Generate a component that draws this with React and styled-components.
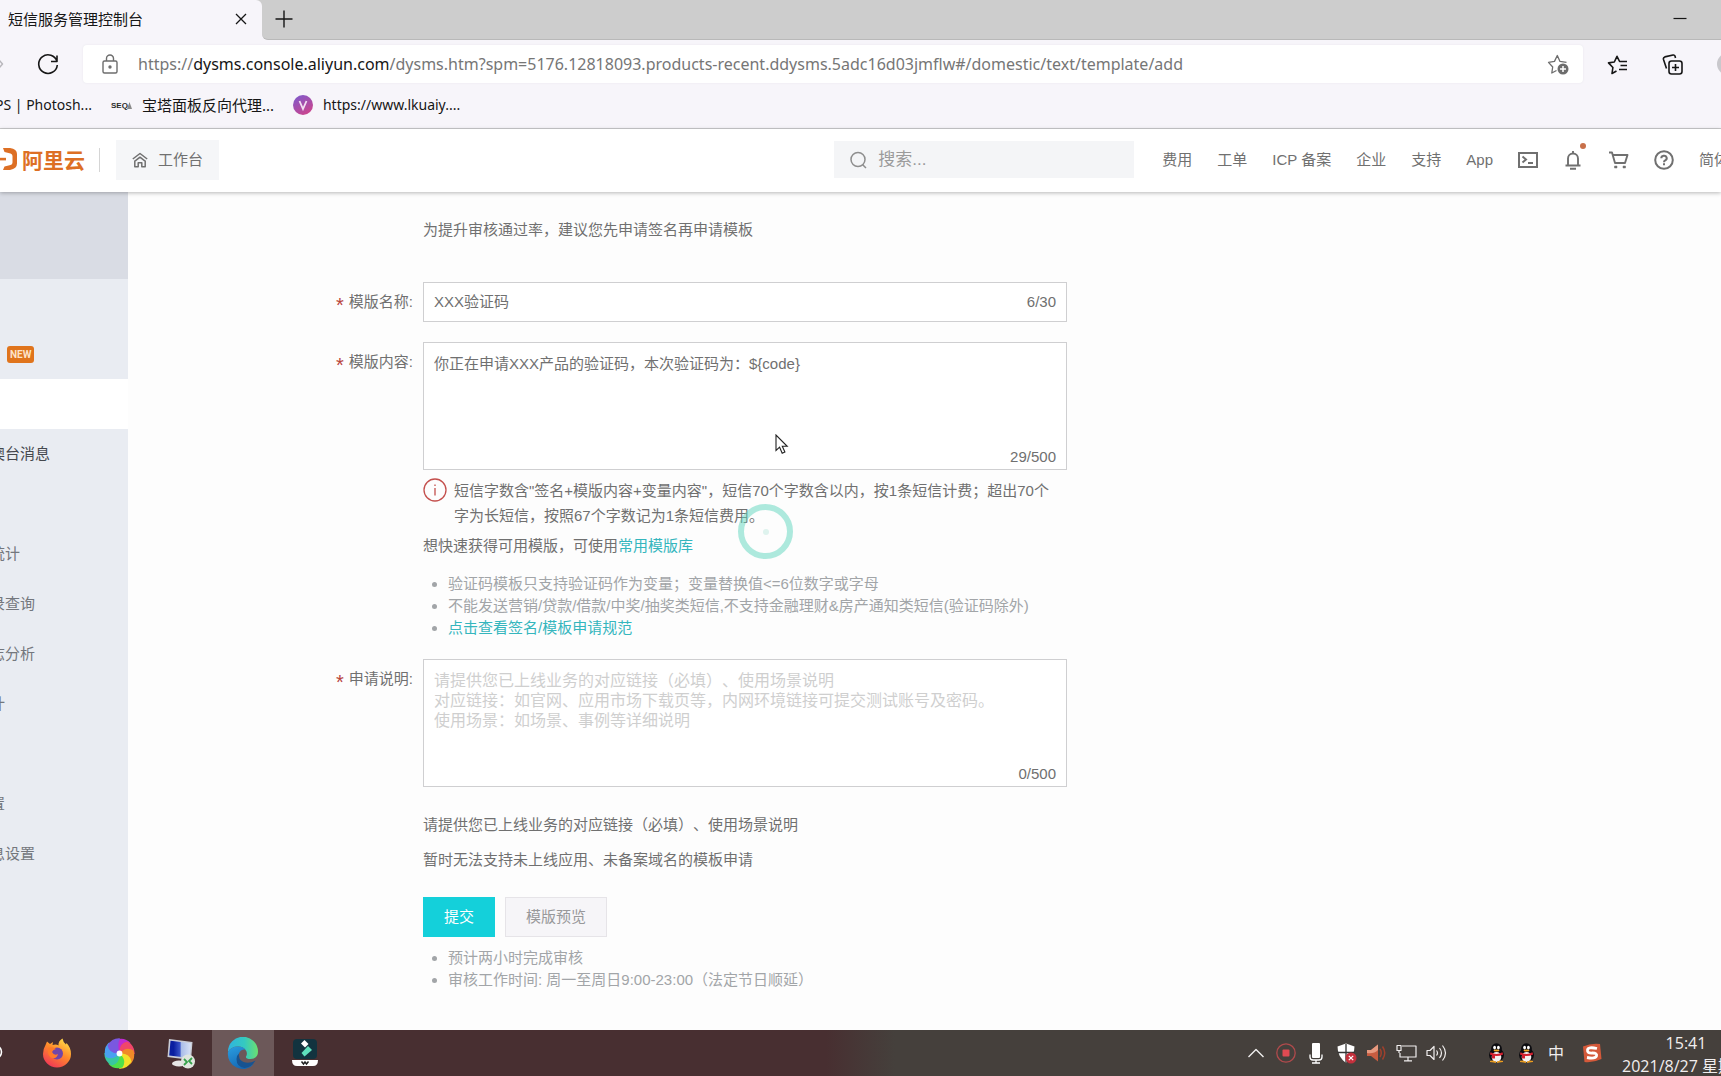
import React from "react";
import styled, { createGlobalStyle } from "styled-components";

const CJK = `"Noto Sans CJK SC", sans-serif`;

const Global = createGlobalStyle`
  * { box-sizing: border-box; }
  html, body { margin: 0; padding: 0; }
  body {
    overflow: hidden;
    background: #fdfdfd;
    color: #707070;
    font: 15px/20px "Liberation Sans", ${CJK};
    text-spacing-trim: space-all;
  }
  button, input, textarea { font: inherit; color: inherit; }
  button { padding: 0; border: 0; background: none; }
  a { text-decoration: none; color: inherit; }
  svg { display: block; flex: none; }
`;

const Page = styled.div`
  position: relative;
  display: flex;
  flex-direction: column;
  min-height: 100vh;
  overflow: hidden;
`;

/* ---------- browser chrome ---------- */

const Browser = styled.div`
  background: #f7f5fa;
  border-bottom: 1px solid #cbcbcd;
  color: #161616;
  font-family: "Noto Sans", ${CJK};
`;

const TabStrip = styled.div`
  display: flex;
  height: 40px;
  background: #cdcdcd;
`;

const TabWell = styled.div`
  display: flex;
  flex: 1;
  align-items: center;
  justify-content: space-between;
  padding: 0 34px 2px 12px;
  background: #cdcdcd;
  border-bottom: 1px solid #b9b9b9;
  border-bottom-left-radius: 6px;
`;

const TabBack = styled.div`
  display: flex;
  flex: 1;
  background: #f7f5fa;
`;

const Tab = styled.div`
  display: flex;
  align-items: center;
  justify-content: space-between;
  width: 262px;
  padding: 0 14px 2px 8px;
  background: #f7f5fa;
  border-top-right-radius: 6px;
`;

const IconButton = styled.button`
  display: flex;
  align-items: center;
  justify-content: center;
`;

const Toolbar = styled.div`
  display: flex;
  align-items: center;
  height: 48px;
`;

const Forward = styled.div`
  width: 37px;
`;

const Address = styled.div`
  display: flex;
  flex: 1;
  align-items: center;
  height: 38px;
  margin-left: 24px;
  padding: 0 14px 0 18px;
  background: #fff;
  border-radius: 4px;
  box-shadow: 0 0 2px #e6e4ea;
`;

const Url = styled.div`
  flex: 1;
  margin-left: 19px;
  color: #767676;
  font-size: 16px;
  line-height: 24px;
  white-space: nowrap;
`;

const Host = styled.span`
  color: #161616;
`;

const ToolIcons = styled.div`
  display: flex;
  align-items: center;
  gap: 34px;
  margin: 0 -18px 0 24px;
`;

const Avatar = styled.div`
  width: 22px;
  height: 22px;
  border-radius: 50%;
  background: #c9c8cc;
`;

const Bookmarks = styled.nav`
  display: flex;
  align-items: center;
  height: 40px;
  margin-left: -5px;
  padding-bottom: 6px;
  gap: 19px;
`;

const Bookmark = styled.a`
  display: flex;
  align-items: center;
  gap: 10px;
  font-size: ${(p) => (p.$latin ? 14 : 15)}px;
  white-space: nowrap;
`;

/* ---------- console header ---------- */

const Header = styled.header`
  position: relative;
  display: flex;
  align-items: center;
  height: 63px;
  padding-bottom: 2px;
  background: #fff;
  box-shadow: 0 1px 4px rgba(0, 0, 0, 0.28);
`;

const Brand = styled.a`
  display: flex;
  align-items: center;
  gap: 4px;
  padding: 0 14px 2px 0;
  color: #dd6f24;
  font: 700 21px/24px ${CJK};
`;

const Workbench = styled.button`
  display: flex;
  align-items: center;
  gap: 10px;
  height: 40px;
  margin-left: 16px;
  padding: 0 16px;
  background: #f5f6f8;
`;

const Rule = styled.div`
  width: 1px;
  height: 24px;
  background: #d5d5d5;
`;

const Search = styled.label`
  display: flex;
  align-items: center;
  gap: 11px;
  width: 300px;
  height: 37px;
  margin-left: auto;
  padding: 0 16px;
  background: #f4f5f7;
`;

const SearchInput = styled.input`
  flex: 1;
  min-width: 0;
  padding: 0;
  border: 0;
  outline: 0;
  background: none;
  font-size: 17px;
  &::placeholder { color: #9b9b9b; opacity: 1; }
`;

const TopNav = styled.nav`
  display: flex;
  align-items: center;
  gap: 25px;
  margin: 0 -8px 0 28px;
  white-space: nowrap;
`;

const BellWrap = styled.button`
  position: relative;
  display: flex;
`;

const Dot = styled.span`
  position: absolute;
  top: -7px;
  right: -3px;
  width: 6px;
  height: 6px;
  border-radius: 50%;
  background: #c8704a;
`;

/* ---------- body ---------- */

const Body = styled.div`
  display: flex;
  flex: 1;
`;

const Side = styled.nav`
  width: 128px;
  background: #e9ecf2;
`;

const SideTop = styled.div`
  height: 87px;
  background: #d9dce4;
`;

const SideItem = styled.a`
  display: flex;
  align-items: center;
  height: 50px;
  background: ${(p) => (p.$active ? "#fff" : "transparent")};
  color: ${(p) => (p.$strong ? "#45484e" : "#74777d")};
`;

const SideText = styled.span`
  display: flex;
  justify-content: flex-end;
  width: ${(p) => p.$end}px;
  overflow: hidden;
  white-space: nowrap;
`;

const NewTag = styled.span`
  margin-left: 7px;
  padding: 0 3px;
  border-radius: 3px;
  background: #e0741c;
  color: #fde3c8;
  font: 700 10px/17px "Roboto", sans-serif;
`;

const Form = styled.form`
  display: grid;
  flex: 1;
  grid-template-columns: 285px minmax(0, 644px);
  column-gap: 10px;
  row-gap: 20px;
  align-content: start;
  padding-top: 28px;
`;

const Lead = styled.p`
  grid-column: 2;
  margin: 0 0 22px;
`;

const Label = styled.label`
  display: flex;
  align-items: center;
  justify-content: flex-end;
  gap: 5px;
  height: 40px;
`;

const Star = styled.span`
  padding-top: 6px;
  color: #b8433c;
  font-size: 20px;
`;

const Field = styled.div`
  display: flex;
  height: 40px;
  padding: 0 10px;
  align-items: center;
  background: #fff;
  border: 1px solid #cfcfd1;
`;

const AreaField = styled.div`
  height: 128px;
  padding: 11px 10px 0;
  background: #fff;
  border: 1px solid #cfcfd1;
`;

const TextInput = styled.input`
  flex: 1;
  min-width: 0;
  padding: 0;
  border: 0;
  outline: 0;
  background: none;
`;

const TextArea = styled.textarea`
  display: block;
  width: 100%;
  height: 92px;
  padding: 0;
  border: 0;
  outline: 0;
  resize: none;
  overflow: hidden;
  background: none;
  line-height: 20px;
  &::placeholder { color: #cfcfcf; opacity: 1; font-size: 16px; }
`;

const Count = styled.div`
  text-align: right;
  line-height: 22px;
`;

const Notice = styled.div`
  display: flex;
  gap: 7px;
  margin-top: 8px;
  line-height: 25px;
`;

const Quick = styled.p`
  margin: 6px 0 15px;
  line-height: 24px;
`;

const Link = styled.a`
  color: #35b6bd;
`;

const List = styled.ul`
  margin: 0;
  padding-left: 25px;
  color: #a2a5a8;
  line-height: 22px;
`;

const After = styled.div`
  grid-column: 2;
  display: flex;
  flex-direction: column;
  gap: 15px;
  padding-top: 8px;
`;

const Para = styled.p`
  margin: 0;
`;

const Actions = styled.div`
  display: flex;
  gap: 10px;
  grid-column: 2;
  margin-top: 7px;
`;

const Action = styled.button`
  height: 40px;
  padding: 0 20px;
  border: 1px solid ${(p) => (p.$primary ? "#14d0da" : "#e6e4e8")};
  background: ${(p) => (p.$primary ? "#14d0da" : "#f6f5f8")};
  color: ${(p) => (p.$primary ? "#fff" : "#98989a")};
`;

const Foot = styled.div`
  grid-column: 2;
  margin-top: -10px;
`;

/* ---------- taskbar ---------- */

const Taskbar = styled.footer`
  display: flex;
  align-items: center;
  height: 46px;
  background: linear-gradient(90deg, #482f31 48%, #45403c 52%);
  color: #f1eeee;
  font: 16px/20px "Open Sans", ${CJK};
`;

const Task = styled.button`
  display: flex;
  align-items: center;
  justify-content: center;
  width: 62px;
  height: 46px;
  background: ${(p) => (p.$active ? "#6c5859" : "transparent")};
  &:first-child { margin-left: -36px; }
`;

const Tray = styled.div`
  display: flex;
  align-items: center;
  margin-left: auto;
  margin-right: -49px;
`;

const TrayItem = styled.div`
  display: flex;
  align-items: center;
  justify-content: center;
  width: 30px;
`;

const ImeGroup = styled.div`
  display: flex;
  align-items: center;
  margin: 0 11px 0 30px;
`;

const Clock = styled.div`
  width: 168px;
  padding-top: 4px;
  text-align: center;
  line-height: 23px;
  white-space: nowrap;
`;

/* ---------- pointer overlays ---------- */

const Ring = styled.div`
  position: absolute;
  left: 738px;
  top: 504px;
  display: flex;
  align-items: center;
  justify-content: center;
  width: 55px;
  height: 55px;
  border: 6px solid rgba(94, 214, 190, 0.5);
  border-radius: 50%;
  pointer-events: none;
  &::after {
    content: "";
    width: 6px;
    height: 6px;
    border-radius: 50%;
    background: #dff3ee;
  }
`;

const Pointer = styled.svg`
  position: absolute;
  left: 775px;
  top: 434px;
  pointer-events: none;
`;

/* ---------- drawings ---------- */

const Line = ({ w = 20, h = 20, box = "0 0 20 20", sw = 1.4, c = "currentColor", children }) => (
  <svg width={w} height={h} viewBox={box} fill="none" stroke={c} strokeWidth={sw} strokeLinejoin="round">
    {children}
  </svg>
);

const Penguin = () => (
  <svg width="17" height="20" viewBox="0 0 17 20">
    <ellipse cx="8.5" cy="12" rx="7.5" ry="7" fill="#0c0c10" />
    <ellipse cx="8.5" cy="6" rx="5.4" ry="5.8" fill="#0c0c10" />
    <ellipse cx="8.5" cy="14" rx="4.8" ry="5" fill="#f4f2f2" />
    <ellipse cx="6.6" cy="4.6" rx="1.4" ry="1.9" fill="#fff" />
    <ellipse cx="10.4" cy="4.6" rx="1.4" ry="1.9" fill="#fff" />
    <ellipse cx="8.5" cy="7.6" rx="3" ry="1" fill="#f0a020" />
    <path d="M2.5 9.2q6 3.4 12 0l.6 2.4q-6.300 3-13.200 0z" fill="#d3202f" />
    <path d="M4 11.500h3v4H4z" fill="#d3202f" />
    <path d="M2 18.500q3-1.500 6 .8zM15 18.500q-3-1.500-6 .8z" fill="#f0a020" stroke="#f0a020" />
  </svg>
);

const Pinwheel = () => {
  const colors = ["#c02bd0", "#f0466a", "#f08a28", "#f4e02a", "#4fe04a", "#39c7a0", "#4aa0f0", "#7a58e0"];
  return (
    <svg width="31" height="31" viewBox="-16 -16 32 32">
      {colors.map((c, i) => (
        <path key={c} d="M0 0Q-8 -7 -3 -14.500Q6 -17 11.500 -10.500Q5 -9 0 0z" fill={c} transform={`rotate(${i * 45})`} />
      ))}
      <circle r="3" fill="#fff" />
    </svg>
  );
};

const side = [
  { text: "澳台消息", end: 50, strong: true },
  { text: "", end: 0 },
  { text: "统计", end: 20 },
  { text: "录查询", end: 35 },
  { text: "志分析", end: 35 },
  { text: "计", end: 5 },
  { text: "", end: 0 },
  { text: "置", end: 5 },
  { text: "息设置", end: 35 },
];

const Required = ({ id, children }) => (
  <Label htmlFor={id}>
    <Star>*</Star>
    <span>{children}:</span>
  </Label>
);

function BrowserChrome() {
  return (
    <Browser>
      <TabStrip>
        <Tab>
          <span>短信服务管理控制台</span>
          <IconButton aria-label="关闭标签页">
            <Line w={14} h={14} box="0 0 14 14" sw={1.3}><path d="M2 2l10 10M12 2L2 12" /></Line>
          </IconButton>
        </Tab>
        <TabBack>
          <TabWell>
            <IconButton aria-label="新建标签页">
              <Line w={20} h={20} sw={1.4}><path d="M10 1.500v17M1.500 10h17" /></Line>
            </IconButton>
            <IconButton aria-label="最小化">
              <Line w={14} h={8} box="0 0 14 8" sw={1.2}><path d="M.5 3.500h13" /></Line>
            </IconButton>
          </TabWell>
        </TabBack>
      </TabStrip>
      <Toolbar>
        <Forward>
          <Line w={4} h={10} box="0 0 4 10" c="#b9b7bc" sw={1.5}><path d="M-1 1l3.500 4L-1 9" /></Line>
        </Forward>
        <IconButton aria-label="刷新">
          <Line w={22} h={22} box="0 0 22 22" sw={1.6}>
            <path d="M20 8.600A9.300 9.300 0 1 0 20.300 12M20 2.500v6h-6" />
          </Line>
        </IconButton>
        <Address>
          <Line w={18} h={22} box="0 0 18 22" c="#6d6d6d" sw={1.4}>
            <rect x="2" y="8" width="14" height="12" rx="1.500" />
            <path d="M5.500 8V5.500a3.500 3.500 0 0 1 7 0V8" />
            <circle cx="9" cy="14" r="1" fill="#6d6d6d" />
          </Line>
          <Url role="textbox" aria-label="地址栏">
            https://<Host>dysms.console.aliyun.com</Host>
            /dysms.htm?spm=5176.12818093.products-recent.ddysms.5adc16d03jmflw#/domestic/text/template/add
          </Url>
          <IconButton aria-label="添加收藏">
            <Line w={22} h={22} box="0 0 22 22" c="#6d6d6d" sw={1.300}>
              <path d="M9.500 17.500L4.800 20l.9-6L1.500 9.400l6-1L10.300 2.500l2.700 5.900 6.500.9" />
              <circle cx="16" cy="16" r="5.500" fill="#6d6d6d" stroke="none" />
              <path d="M16 13v6M13 16h6" stroke="#fff" strokeWidth="1.500" />
            </Line>
          </IconButton>
        </Address>
        <ToolIcons>
          <IconButton aria-label="收藏夹">
            <Line w={21} h={21} box="0 0 21 21" sw={1.600}>
              <path d="M9.500 17L5 19.500l.9-6L1.500 8.900l5.800-.9L10 2.300 12.600 7.500H20M13.500 11.500H20M12 15.500h8" />
            </Line>
          </IconButton>
          <IconButton aria-label="集锦">
            <Line w={21} h={21} box="0 0 21 21" sw={1.600}>
              <rect x="7" y="7" width="13" height="13" rx="2.500" />
              <path d="M13.500 10v7M10 13.500h7M4.500 14.500L1.500 5.500q-.5-2 1.300-2.600L11 1q1.500-.3 2 1l.5 2" />
            </Line>
          </IconButton>
          <Avatar />
        </ToolIcons>
      </Toolbar>
      <Bookmarks>
        <Bookmark href="#ps" $latin>PS | Photosh...</Bookmark>
        <Bookmark href="#bt">
          <svg width="21" height="14" viewBox="0 0 21 14">
            <text x="0" y="10" fontSize="8" fontWeight="700" fontFamily="Liberation Sans, sans-serif" fill="#2a2a2a">SEQ</text>
            <path d="M16 11l2.500-7L21 11z" fill="#8a8a8a" />
          </svg>
          宝塔面板反向代理...
        </Bookmark>
        <Bookmark href="#lk" $latin>
          <svg width="20" height="20" viewBox="0 0 20 20">
            <defs>
              <linearGradient id="vg" x1="0" y1="0" x2="0.600" y2="1">
                <stop offset="0" stopColor="#7a5bd0" />
                <stop offset="1" stopColor="#c9458f" />
              </linearGradient>
            </defs>
            <circle cx="10" cy="10" r="10" fill="url(#vg)" />
            <path d="M6.500 6L10 14l3.500-8" fill="none" stroke="#f2dff2" strokeWidth="1.800" />
          </svg>
          https://www.lkuaiy....
        </Bookmark>
      </Bookmarks>
    </Browser>
  );
}

function ConsoleHeader() {
  return (
    <Header>
      <Brand href="#home">
        <svg width="18" height="24" viewBox="0 0 18 24">
          <path d="M0 10.800h6v2.600H0z" fill="currentColor" />
          <path d="M3 1h7q7 1 7 6v9.500q0 5-7 6.500H3l1.500-3.500 6-1.500q2-.5 2-2.500V9q0-2-2-2.500l-6-1.500z" fill="currentColor" />
        </svg>
        阿里云
      </Brand>
      <Rule />
      <Workbench>
        <Line w={16} h={16} box="0 0 16 16" sw={1.500}>
          <path d="M.8 7L8 1.500 15.200 7M2.600 9.300L8 5.200l5.400 4.100M2.800 8.500v6.200h3.400v-4h3.600v4h3.400V8.500" />
        </Line>
        工作台
      </Workbench>
      <Search>
        <Line w={17} h={18} box="0 0 17 18" c="#8e8e8e" sw={1.500}>
          <circle cx="8" cy="8.500" r="7" /><path d="M12.500 13.500L16 17" />
        </Line>
        <SearchInput aria-label="搜索" placeholder="搜索..." />
      </Search>
      <TopNav>
        <a href="#fee">费用</a>
        <a href="#order">工单</a>
        <a href="#icp">ICP 备案</a>
        <a href="#ent">企业</a>
        <a href="#help">支持</a>
        <a href="#app">App</a>
        <IconButton aria-label="终端">
          <Line w={20} h={16} box="0 0 20 16" sw={2}>
            <path strokeLinejoin="miter" d="M1 1h18v14H1zM4.500 4.500L8 7.500l-3.500 3M10 11h5" />
          </Line>
        </IconButton>
        <BellWrap aria-label="消息">
          <Line w={20} h={20} box="-1 0 20 20" sw={1.900}>
            <path d="M1.500 15.500h15M4 15V8.500a5 5 0 0 1 10 0V15M9 3.500V1M6 18.800h6" />
          </Line>
          <Dot />
        </BellWrap>
        <IconButton aria-label="购物车">
          <Line w={21} h={18} box="0 0 20 18" sw={1.900}>
            <path d="M.5 1.500h3L6.500 12h10L19 4H4.500" />
            <path d="M6 15h2.500v2H6zM14.500 15H17v2h-2.500z" fill="currentColor" strokeWidth="0.500" />
          </Line>
        </IconButton>
        <IconButton aria-label="帮助">
          <Line w={20} h={20} sw={2}>
            <circle cx="10" cy="10" r="8.800" />
            <path d="M7.300 8.200a2.700 2.500 0 1 1 3.900 2.200q-1.200.6-1.200 1.800M10 13.300v2" />
          </Line>
        </IconButton>
        <a href="#lang">简体</a>
      </TopNav>
    </Header>
  );
}

function Sidebar() {
  return (
    <Side>
      <SideTop />
      <SideItem href="#overview" />
      <SideItem href="#new"><NewTag>NEW</NewTag></SideItem>
      <SideItem href="#domestic" $active />
      {side.map((s, i) => (
        <SideItem key={i} href={"#m" + i} $strong={s.strong}>
          <SideText $end={s.end}><span>{s.text}</span></SideText>
        </SideItem>
      ))}
    </Side>
  );
}

function TemplateForm() {
  return (
    <Form onSubmit={(e) => e.preventDefault()}>
      <Lead>为提升审核通过率，建议您先申请签名再申请模板</Lead>

      <Required id="name">模版名称</Required>
      <Field>
        <TextInput id="name" defaultValue="XXX验证码" />
        <span>6/30</span>
      </Field>

      <Required id="content">模版内容</Required>
      <div>
        <AreaField>
          <TextArea id="content" defaultValue="你正在申请XXX产品的验证码，本次验证码为：${code}" />
          <Count>29/500</Count>
        </AreaField>
        <Notice>
          <Line w={24} h={24} box="0 0 24 24" c="#c4504d" sw={1.300}>
            <circle cx="12" cy="12" r="11" /><path d="M12 10v7.500M12 6.500v1.500" />
          </Line>
          <span>
            短信字数含"签名+模版内容+变量内容"，短信70个字数含以内，按1条短信计费；超出70个
            <br />
            字为长短信，按照67个字数记为1条短信费用。
          </span>
        </Notice>
        <Quick>想快速获得可用模版，可使用<Link href="#lib">常用模版库</Link></Quick>
        <List>
          <li>验证码模板只支持验证码作为变量；变量替换值&lt;=6位数字或字母</li>
          <li>不能发送营销/贷款/借款/中奖/抽奖类短信,不支持金融理财&amp;房产通知类短信(验证码除外)</li>
          <li><Link href="#rules">点击查看签名/模板申请规范</Link></li>
        </List>
      </div>

      <Required id="desc">申请说明</Required>
      <AreaField>
        <TextArea
          id="desc"
          placeholder={"请提供您已上线业务的对应链接（必填）、使用场景说明\n对应链接：如官网、应用市场下载页等，内网环境链接可提交测试账号及密码。\n使用场景：如场景、事例等详细说明"}
        />
        <Count>0/500</Count>
      </AreaField>

      <After>
        <Para>请提供您已上线业务的对应链接（必填）、使用场景说明</Para>
        <Para>暂时无法支持未上线应用、未备案域名的模板申请</Para>
      </After>
      <Actions>
        <Action type="submit" $primary>提交</Action>
        <Action type="button">模版预览</Action>
      </Actions>
      <Foot>
        <List>
          <li>预计两小时完成审核</li>
          <li>审核工作时间: 周一至周日9:00-23:00（法定节日顺延）</li>
        </List>
      </Foot>
    </Form>
  );
}

function TaskbarView() {
  return (
    <Taskbar>
      <Task aria-label="Cortana">
        <Line w={18} h={18} box="0 0 18 18" c="#fff" sw={1.600}><circle cx="9" cy="8" r="6.500" /></Line>
      </Task>
      <Task aria-label="Firefox">
        <svg width="30" height="30" viewBox="0 0 30 30">
          <defs>
            <linearGradient id="ff" x1="0.800" y1="0" x2="0.200" y2="1">
              <stop offset="0" stopColor="#ffe14a" />
              <stop offset="0.450" stopColor="#ff8a2a" />
              <stop offset="1" stopColor="#f0305a" />
            </linearGradient>
          </defs>
          <path d="M3.500 7L5 3.500 8 6l3-2-.5 3q4-1 6 .5Q16 3 20.500.5q.5 3.500 3.500 6l.5-1.500Q29 9.500 29 16a14 13.500 0 0 1-28 0q0-5 2.500-9z" fill="url(#ff)" />
          <circle cx="15" cy="15.500" r="6" fill="#7046a8" />
          <path d="M6 10q5-2 8 1-3 .5-4 3 2 4 6 2-1 5-6 4-5-2-4-10z" fill="#ff7a2a" />
        </svg>
      </Task>
      <Task aria-label="相册"><Pinwheel /></Task>
      <Task aria-label="远程桌面">
        <svg width="30" height="31" viewBox="0 0 30 31">
          <defs>
            <linearGradient id="pc"><stop offset="0.200" stopColor="#0a1fa0" /><stop offset="0.500" stopColor="#3a55c8" /><stop offset="0.550" stopColor="#a9bce8" /><stop offset="1" stopColor="#d8e2f5" /></linearGradient>
          </defs>
          <path d="M3 1l23.500 3-1.500 18L1.500 19z" fill="#c9ccd6" />
          <path d="M4.500 2.800l20.500 2.500L23.700 20 3.200 17.500z" fill="url(#pc)" />
          <ellipse cx="13" cy="25.500" rx="7" ry="3" fill="#e6e6e6" />
          <circle cx="22" cy="23.500" r="7" fill="#dfe6de" />
          <path d="M18 21l3 3-3 3M26 20l-3 3 3 3" fill="none" stroke="#35a24a" strokeWidth="1.800" />
        </svg>
      </Task>
      <Task $active aria-label="Edge">
        <svg width="32" height="32" viewBox="0 0 32 32">
          <defs>
            <linearGradient id="e1"><stop offset="0" stopColor="#2fb4e0" /><stop offset="0.550" stopColor="#35c9c0" /><stop offset="1" stopColor="#6be070" /></linearGradient>
            <linearGradient id="e2" x1="0" y1="0" x2="0.500" y2="1"><stop offset="0" stopColor="#2a9de0" /><stop offset="1" stopColor="#1568b4" /></linearGradient>
          </defs>
          <path d="M1 15A15 15 0 0 1 31 14.500q0 7-7.500 7.500-5 0-4.500-2.500 1.500-2 .5-5Q17 9.500 11 9.500 4 9.500 1 15z" fill="url(#e1)" />
          <path d="M1 15q3-5.500 10-5.500 5 0 7.500 3-5-.5-6.500 4-1.500 6 4 10.500 5 3 11 0A15 15 0 0 1 1 15z" fill="url(#e2)" />
          <path d="M12 16.500q-1 6 4.500 8.500 6 2 12-1.500-4 7-11 7.500-8-1-8-9 0-3.500 2.500-5.500z" fill="#175391" />
        </svg>
      </Task>
      <Task aria-label="Filmora">
        <svg width="28" height="30" viewBox="0 0 28 30">
          <rect x="2" y="1" width="24" height="20" rx="4" fill="#12333f" />
          <path d="M10 5.500l3.500-3.500L17.500 6 14 9.500z" fill="#fff" />
          <path d="M17 8l4 4-7.500 6.500-3-3.500z" fill="#5fe0bd" />
          <path d="M1 22h26q0 6-5 6H6q-5 0-5-6z" fill="#fff" />
          <path d="M10.500 23.500l2 2.500 1.500-2 1.500 2 2-2.500" fill="none" stroke="#222" strokeWidth="1.500" />
        </svg>
      </Task>
      <Tray>
        <TrayItem><Line w={18} h={18} box="0 0 18 18" sw={1.400}><path d="M1.500 13L9 5.500l7.500 7.500" /></Line></TrayItem>
        <TrayItem>
          <svg width="20" height="20" viewBox="0 0 20 20">
            <circle cx="10" cy="10" r="9.200" fill="none" stroke="#b04a4c" strokeWidth="1.300" />
            <rect x="6.500" y="6.500" width="7" height="7" rx="1" fill="#e04a52" />
          </svg>
        </TrayItem>
        <TrayItem>
          <svg width="14" height="21" viewBox="0 0 14 21" fill="#fff">
            <rect x="3" y="0" width="8" height="15" rx="1" />
            <path d="M1 11.500v2.500q0 3 3 3h6q3 0 3-3v-2.500M7 17v3M3 20h8" fill="none" stroke="#fff" strokeWidth="1.300" />
          </svg>
        </TrayItem>
        <TrayItem>
          <svg width="21" height="21" viewBox="0 0 21 21">
            <path d="M10 .5l8.500 3q0 10-8.500 16.500Q1.500 13.500 1.500 3.500z" fill="#fff" />
            <path d="M10 1v19M1.500 9.500h17" stroke="#333" strokeWidth="1.300" />
            <circle cx="15" cy="15" r="5.500" fill="#c4303c" />
            <path d="M12.800 12.800l4.400 4.400M17.200 12.800l-4.400 4.400" stroke="#fff" strokeWidth="1.200" />
          </svg>
        </TrayItem>
        <TrayItem>
          <svg width="19" height="18" viewBox="0 0 19 18">
            <path d="M0 6h4l7-5.500v17L4 12H0z" fill="#c65c40" />
            <path d="M0 6h4l7-5.500V6q-4 4-11 3z" fill="#e69a80" />
            <path d="M13 5q2.500 4 0 8M15.500 2.500q4.500 6.500 0 13" fill="none" stroke="#a0402c" strokeWidth="1.500" />
          </svg>
        </TrayItem>
        <TrayItem>
          <Line w={21} h={18} box="0 0 21 18" sw={1.200}>
            <path d="M6 2h14v11H4V9M1 1.500h4v5H1zM3 6.500V9M12 13v3.500M8 16.800h8" />
          </Line>
        </TrayItem>
        <TrayItem>
          <Line w={21} h={18} box="0 0 21 18" sw={1.200}>
            <path d="M1 6.500h3l4-4v13l-4-4H1zM10.500 6.500q2 2.500 0 5M13.500 4q4 5 0 10M16.500 1.500q6 7.500 0 15" />
          </Line>
        </TrayItem>
        <ImeGroup>
          <TrayItem><Penguin /></TrayItem>
          <TrayItem><Penguin /></TrayItem>
          <TrayItem>中</TrayItem>
        </ImeGroup>
        <svg width="20" height="20" viewBox="0 0 20 20">
          <path d="M1 3.500Q9 0 18 1l1.500 15Q11 20 2.500 19z" fill="#d4593a" />
          <path d="M15 5.500Q6 3.500 5.500 7t5 3q5 0 4 3t-9.500 1.500" fill="none" stroke="#fff" strokeWidth="2.800" />
        </svg>
        <Clock>15:41<br />2021/8/27 星期五</Clock>
      </Tray>
    </Taskbar>
  );
}

export default function App() {
  return (
    <Page>
      <Global />
      <BrowserChrome />
      <ConsoleHeader />
      <Body>
        <Sidebar />
        <TemplateForm />
      </Body>
      <TaskbarView />
      <Ring />
      <Pointer width="14" height="21" viewBox="0 0 14 21">
        <path d="M1 1v15.500l3.600-3.300 2.600 6 2.700-1.200-2.600-5.700h4.900z" fill="#fff" stroke="#222" strokeWidth="1.100" />
      </Pointer>
    </Page>
  );
}
